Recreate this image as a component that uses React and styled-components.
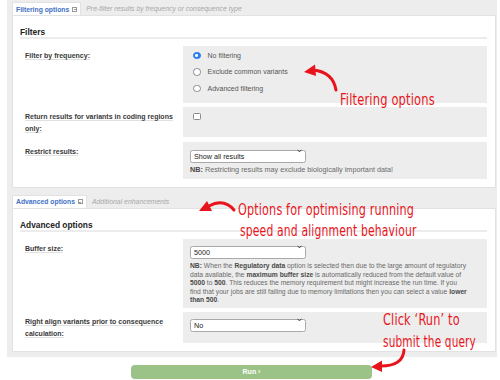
import React from 'react';
import styled, { createGlobalStyle } from 'styled-components';

const Global = createGlobalStyle`
  html, body { margin: 0; padding: 0; background: #fff; }
  body {
    font-family: "Liberation Sans", Arial, Helvetica, sans-serif;
    width: 500px; height: 380px; overflow: hidden;
  }
  * { box-sizing: border-box; }
`;

const Page = styled.div`
  position: relative;
  width: 500px;
  height: 380px;
`;

const Shell = styled.div`
  margin-left: 7px;
  width: 490px;
  background: #ededed;
  padding: 0 1px 5px 5px;
  display: flex;
  flex-direction: column;
`;

const TabBar = styled.div`
  display: flex;
  align-items: flex-end;
  height: 15px;
  margin-top: ${p => p.$gap || 0}px;
`;

const Tab = styled.div`
  height: 13px;
  display: flex;
  align-items: center;
  gap: 3px;
  padding: 0 3px;
  background: #fff;
  border: 1px solid #e2e2e2;
  border-bottom: none;
  color: #3f6fc4;
  font-size: 6.8px;
  font-weight: bold;
`;

const TabIcon = styled.span`
  width: 5px;
  height: 5px;
  border: 0.8px solid #999;
  position: relative;
  display: inline-block;
  &::after {
    content: "";
    position: absolute;
    left: 0.5px; right: 0.5px; top: 1.6px;
    height: 0.8px;
    background: #999;
  }
`;

const TabHint = styled.div`
  height: 13px;
  display: flex;
  align-items: center;
  padding-left: 5px;
  font-size: 6.9px;
  font-style: italic;
  color: #a8a8a8;
`;

const Panel = styled.div`
  background: #fff;
  border: 1px solid #e2e2e2;
  padding: 0 8px 8px 7px;
`;

const Heading = styled.div`
  padding-top: 10px;
  line-height: 12px;
  height: 23px;
  font-size: 8.4px;
  font-weight: bold;
  color: #222;
  border-bottom: 2px solid #ececec;
  margin-bottom: 7px;
`;

const Row = styled.div`
  display: grid;
  grid-template-columns: 163px 1fr;
  margin-top: ${p => p.$gap || 0}px;
`;

const Label = styled.div`
  padding: 4px 0 0 5px;
  font-size: 7px;
  line-height: 12.5px;
  font-weight: bold;
  color: #3a3a3a;
  min-height: ${p => p.$min || 0}px;
`;

const LabelText = styled.span`
  border-bottom: 1px solid #e0e0e0;
`;

const Field = styled.div`
  background: #ededed;
  padding: ${p => p.$pad || '3px 7px 4px 7px'};
  display: flex;
  flex-direction: column;
  align-items: flex-start;
`;

const Option = styled.label`
  display: flex;
  align-items: center;
  gap: 7px;
  height: 16.5px;
  font-size: 7px;
  color: #555;
`;

const Radio = styled.span`
  width: 7.5px;
  height: 7.5px;
  border-radius: 50%;
  border: 0.8px solid ${p => (p.$on ? '#2a7ef0' : '#8a8a8a')};
  background: ${p => (p.$on ? '#2a7ef0' : '#fff')};
  display: flex;
  align-items: center;
  justify-content: center;
  &::after {
    content: "";
    width: 2.6px;
    height: 2.6px;
    border-radius: 50%;
    background: ${p => (p.$on ? '#fff' : 'transparent')};
  }
`;

const Check = styled.span`
  width: 7.5px;
  height: 7.5px;
  border-radius: 1.5px;
  border: 0.8px solid #8a8a8a;
  background: #fff;
  margin: 6px 0 0 3px;
`;

const SelectWrap = styled.div`
  position: relative;
  width: 116px;
  height: 13px;
`;

const Select = styled.select`
  appearance: none;
  -webkit-appearance: none;
  width: 116px;
  height: 13px;
  padding: 0 0 0 3px;
  margin: 0;
  border: 0.8px solid #a9a9a9;
  border-radius: 2.5px;
  background: #fff;
  font-family: "Liberation Sans", Arial, sans-serif;
  font-size: 7.2px;
  color: #222;
  outline: none;
`;

const Chevron = styled.svg`
  position: absolute;
  right: 4px;
  top: 4.5px;
  width: 5px;
  height: 4px;
  pointer-events: none;
`;

const Note = styled.div`
  margin-top: ${p => p.$gap || 7.5}px;
  font-size: ${p => p.$size || 6.6}px;
  line-height: ${p => p.$lh || 9}px;
  color: #6a6a6a;
  white-space: nowrap;
  b { color: #4a4a4a; }
`;

const RunArea = styled.div`
  display: flex;
  justify-content: center;
  padding: 8px 0 0 3px;
`;

const RunButton = styled.button`
  width: 241px;
  height: 14px;
  border: none;
  border-radius: 4px;
  background: #9bc387;
  color: #fff;
  font-family: "Liberation Sans", Arial, sans-serif;
  font-size: 7px;
  font-weight: bold;
  padding: 0;
`;

const Annotation = styled.div`
  position: absolute;
  left: ${p => p.$x}px;
  top: ${p => p.$y}px;
  color: #e8141c;
  font-family: "Liberation Sans Narrow", "DejaVu Sans Condensed", "Roboto Condensed", "Liberation Sans", sans-serif;
  font-size: 15px;
  line-height: 20px;
  white-space: nowrap;
  transform: scaleX(${p => p.$sx || 0.85});
  transform-origin: left top;
  letter-spacing: 0.2px;
`;

const Overlay = styled.svg`
  position: absolute;
  left: 0;
  top: 0;
  width: 500px;
  height: 380px;
  pointer-events: none;
`;

function SelectBox({ value }) {
  return (
    <SelectWrap>
      <Select defaultValue={value}>
        <option>{value}</option>
      </Select>
      <Chevron viewBox="0 0 5 4">
        <path d="M0.6 0.8 L2.5 2.9 L4.4 0.8" fill="none" stroke="#333" strokeWidth="0.9" />
      </Chevron>
    </SelectWrap>
  );
}

function Arrow({ d, head }) {
  return (
    <g>
      <path d={d} fill="none" stroke="#e8141c" strokeWidth="3" strokeLinecap="round" />
      <polygon points={head} fill="#e8141c" />
    </g>
  );
}

export default function App() {
  return (
    <Page>
      <Global />
      <Shell>
        <TabBar>
          <Tab>Filtering options <TabIcon /></Tab>
          <TabHint>Pre-filter results by frequency or consequence type</TabHint>
        </TabBar>
        <Panel>
          <Heading>Filters</Heading>
          <Row>
            <Label><LabelText>Filter by frequency:</LabelText></Label>
            <Field $pad="1px 7px 6px 10px">
              <Option><Radio $on />No filtering</Option>
              <Option><Radio />Exclude common variants</Option>
              <Option><Radio />Advanced filtering</Option>
            </Field>
          </Row>
          <Row $gap={4}>
            <Label $min={30}>
              <LabelText>Return results for variants in coding regions</LabelText><br />
              <LabelText>only:</LabelText>
            </Label>
            <Field $pad="0 7px 0 7px"><Check /></Field>
          </Row>
          <Row $gap={5}>
            <Label><LabelText>Restrict results:</LabelText></Label>
            <Field $pad="3px 7px 4.5px 7px">
              <SelectBox value="Show all results" />
              <Note $size={7.25}><b>NB:</b> Restricting results may exclude biologically important data!</Note>
            </Field>
          </Row>
        </Panel>

        <TabBar $gap={5}>
          <Tab>Advanced options <TabIcon /></Tab>
          <TabHint>Additional enhancements</TabHint>
        </TabBar>
        <Panel>
          <Heading>Advanced options</Heading>
          <Row>
            <Label><LabelText>Buffer size:</LabelText></Label>
            <Field $pad="2px 7px 3px 7px">
              <SelectBox value="5000" />
              <Note $gap={8.5} $lh={8.5} $size={6.72}>
                <b>NB:</b> When the <b>Regulatory data</b> option is selected then due to the large amount of regulatory<br />
                data available, the <b>maximum buffer size</b> is automatically reduced from the default value of<br />
                <b>5000</b> to <b>500</b>. This reduces the memory requirement but might increase the run time. If you<br />
                find that your jobs are still failing due to memory limitations then you can select a value <b>lower</b><br />
                <b>than 500</b>.
              </Note>
            </Field>
          </Row>
          <Row $gap={4}>
            <Label $min={31}>
              <LabelText>Right align variants prior to consequence</LabelText><br />
              <LabelText>calculation:</LabelText>
            </Label>
            <Field $pad="2px 7px 0 7px">
              <SelectBox value="No" />
            </Field>
          </Row>
        </Panel>
      </Shell>

      <RunArea>
        <RunButton>Run ›</RunButton>
      </RunArea>

      <Overlay viewBox="0 0 500 380">
        <Arrow d="M336 90 Q333 72 313 70" head="304,72 315,64.5 316,76" />
        <Arrow d="M234 210 Q224 198 209 206" head="199,211 207,201 212,211" />
        <Arrow d="M404 350 Q403 366 381 366" head="371,367 382,360.5 382,372" />
      </Overlay>

      <Annotation $x={340} $y={90}>Filtering options</Annotation>
      <Annotation $x={238} $y={200} $sx={0.83}>Options for optimising running</Annotation>
      <Annotation $x={240} $y={221} $sx={0.8}>speed and alignment behaviour</Annotation>
      <Annotation $x={383} $y={310} $sx={0.84}>Click ‘Run’ to</Annotation>
      <Annotation $x={383} $y={332} $sx={0.78}>submit the query</Annotation>
    </Page>
  );
}
